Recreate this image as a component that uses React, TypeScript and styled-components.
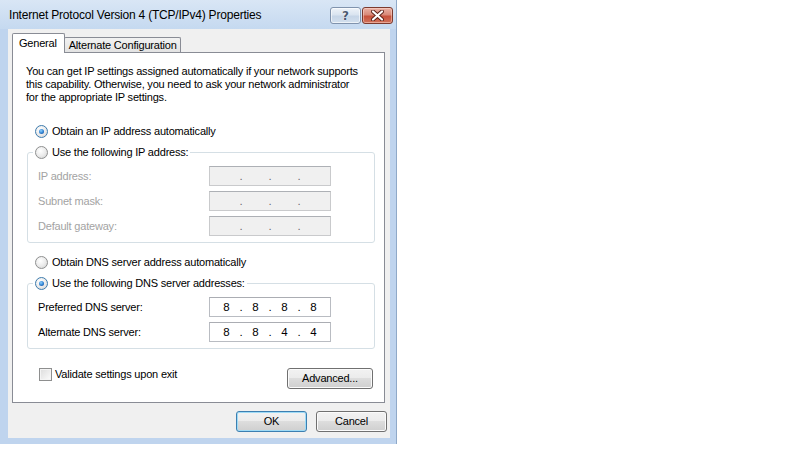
import React from 'react';
import styled, { createGlobalStyle, css } from 'styled-components';

const GlobalStyle = createGlobalStyle`
  html, body {
    margin: 0;
    padding: 0;
    background: #fff;
  }
  body {
    font-family: "Liberation Sans", Arial, sans-serif;
    font-size: 11px;
    letter-spacing: -0.2px;
    color: #000;
  }
  * { box-sizing: border-box; }
`;

const Window = styled.div`
  width: 397px;
  height: 444px;
  display: flex;
  flex-direction: column;
  background: #bfd4ee;
  border-right: 1px solid #8fa9c8;
`;

const TitleBar = styled.div`
  height: 29px;
  display: flex;
  align-items: flex-start;
  padding: 0 3px 0 9px;
  background: linear-gradient(#d9e6f5, #c5d9f0);
`;

const Title = styled.div`
  flex: 1;
  font-size: 12px;
  line-height: 14px;
  margin-top: 8px;
  color: #000;
`;

const CaptionButtons = styled.div`
  display: flex;
  gap: 1px;
  margin-top: 7px;
`;

const CaptionButton = styled.div<{ $close?: boolean }>`
  width: 31px;
  height: 17px;
  border-radius: 3px;
  display: flex;
  align-items: center;
  justify-content: center;
  ${(p) =>
    p.$close
      ? css`
          border: 1px solid #7c3a2e;
          background: linear-gradient(#eab1a5 0%, #d98a79 45%, #c8523c 55%, #d0735c 100%);
          box-shadow: inset 0 0 0 1px rgba(255, 220, 210, 0.5);
        `
      : css`
          border: 1px solid #8093ad;
          background: linear-gradient(#eef3f9 0%, #dae4f0 45%, #c6d5e7 55%, #d3e0ee 100%);
          box-shadow: inset 0 0 0 1px rgba(255, 255, 255, 0.6);
        `}
`;

const HelpGlyph = styled.span`
  font-family: "DejaVu Sans", sans-serif;
  font-weight: bold;
  font-size: 12px;
  line-height: 12px;
  color: #4b5a70;
  text-shadow: 0 0 1px #fff, 0 0 1px #fff;
`;

const Client = styled.div`
  flex: 1;
  margin: 0 6px 6px 8px;
  background: #f0f0f0;
  display: flex;
  flex-direction: column;
  padding: 4px 5px 6px 4px;
`;

const TabStrip = styled.div`
  display: flex;
  align-items: flex-end;
  height: 20px;
  margin-bottom: -1px;
  position: relative;
  z-index: 1;
`;

const Tab = styled.div<{ $active?: boolean }>`
  border: 1px solid #898c95;
  border-radius: 2px 2px 0 0;
  display: flex;
  align-items: center;
  ${(p) =>
    p.$active
      ? css`
          height: 20px;
          padding: 0 7px 2px 6px;
          background: #fff;
          border-bottom: none;
        `
      : css`
          height: 15px;
          margin-left: -1px;
          margin-bottom: 1px;
          padding: 0 3px 0 4px;
          border-bottom: none;
          background: linear-gradient(#f2f2f2, #e3e3e3);
        `}
`;

const Panel = styled.div`
  flex: 1;
  background: #fff;
  border: 1px solid #898c95;
  display: flex;
  flex-direction: column;
  padding-left: 13px;
`;

const Intro = styled.p`
  margin: 12px 0 0;
  line-height: 13px;
`;

const RadioRow = styled.label<{ $disabled?: boolean }>`
  display: flex;
  align-items: center;
  gap: 4px;
  height: 14px;
  margin-left: 9px;
  color: ${(p) => (p.$disabled ? '#a3a3a3' : '#000')};
`;

const RadioDot = styled.span<{ $checked?: boolean }>`
  width: 13px;
  height: 13px;
  border-radius: 50%;
  position: relative;
  flex: none;
  border: 1px solid ${(p) => (p.$checked ? '#3d7bad' : '#8e8f8f')};
  background: radial-gradient(circle at 40% 35%, #ffffff 0%, #ececec 50%, #cfcfcf 100%);
  ${(p) =>
    p.$checked &&
    css`
      &::after {
        content: '';
        position: absolute;
        left: 3px;
        top: 3px;
        width: 5px;
        height: 5px;
        border-radius: 50%;
        background: radial-gradient(circle at 40% 35%, #8ed0ff 0%, #2c7fd0 55%, #16428a 100%);
      }
    `}
`;

const Group = styled.fieldset<{ $top: number }>`
  margin: ${(p) => p.$top}px 0 0 1px;
  width: 348px;
  padding: 0 0 6px 10px;
  border: 1px solid #d5dfe5;
  border-radius: 3px;
  min-width: 0;
`;

const Legend = styled.legend`
  margin-left: -5px;
  padding: 0 2px;
  height: 14px;
  display: flex;
`;

const FieldGrid = styled.div`
  display: grid;
  grid-template-columns: 171px 122px;
  row-gap: 5px;
  margin-top: 7px;
`;

const FieldLabel = styled.span<{ $disabled?: boolean }>`
  display: flex;
  align-items: center;
  height: 20px;
  color: ${(p) => (p.$disabled ? '#a3a3a3' : '#000')};
`;

const IpBox = styled.div<{ $disabled?: boolean }>`
  height: 20px;
  display: flex;
  align-items: center;
  padding-left: 4px;
  border: 1px solid ${(p) => (p.$disabled ? '#c9cacc' : '#b9bcc2')};
  border-top-color: ${(p) => (p.$disabled ? '#adb0b5' : '#abadb3')};
  background: ${(p) => (p.$disabled ? '#f0f0f0' : '#fff')};
  color: ${(p) => (p.$disabled ? '#6d6d6d' : '#000')};
  font-size: 11.5px;
  letter-spacing: 0;
`;

const Octet = styled.span`
  width: 25px;
  text-align: center;
  line-height: 14px;
`;

const Dot = styled.span`
  width: 4px;
  text-align: center;
  line-height: 14px;
`;

const BottomRow = styled.div`
  display: flex;
  align-items: flex-start;
  justify-content: space-between;
  margin: 19px 11px 0 13px;
`;

const CheckRow = styled.label`
  display: flex;
  align-items: center;
  gap: 3px;
  height: 12px;
`;

const CheckBox = styled.span`
  width: 13px;
  height: 13px;
  border: 1px solid #8e8f8f;
  background: linear-gradient(135deg, #dcdcdc, #fcfcfc);
  box-shadow: inset 0 0 0 1px #f4f4f4;
  flex: none;
`;

const Button = styled.button<{ $w: number; $default?: boolean }>`
  width: ${(p) => p.$w}px;
  height: 21px;
  font-family: inherit;
  font-size: 11px;
  letter-spacing: -0.2px;
  color: #000;
  padding: 0 0 1px;
  border-radius: 3px;
  border: 1px solid ${(p) => (p.$default ? '#3c7fb1' : '#707070')};
  background: linear-gradient(#f2f2f2 0%, #ebebeb 49%, #dddddd 50%, #cfcfcf 100%);
  box-shadow: inset 0 0 0 1px ${(p) => (p.$default ? '#9fdbf6' : '#fbfbfb')};
`;

const Footer = styled.div`
  display: flex;
  justify-content: flex-end;
  gap: 9px;
  margin: 8px -2px 0 0;
`;

const IpField: React.FC<{ octets?: string[]; disabled?: boolean }> = ({ octets = ['', '', '', ''], disabled }) => (
  <IpBox $disabled={disabled}>
    {octets.map((o, i) => (
      <React.Fragment key={i}>
        {i > 0 && <Dot>.</Dot>}
        <Octet>{o}</Octet>
      </React.Fragment>
    ))}
  </IpBox>
);

const CloseIcon = () => (
  <svg width="13" height="11" viewBox="0 0 13 11">
    <path d="M2 1.5 L11 9.5 M11 1.5 L2 9.5" stroke="#5a1f16" strokeWidth="4" strokeLinecap="round" />
    <path d="M2 1.5 L11 9.5 M11 1.5 L2 9.5" stroke="#fff" strokeWidth="2.2" strokeLinecap="round" />
  </svg>
);

const App: React.FC = () => {
  const ipRows = ['IP address:', 'Subnet mask:', 'Default gateway:'];
  const dnsRows = [
    { label: 'Preferred DNS server:', octets: ['8', '8', '8', '8'] },
    { label: 'Alternate DNS server:', octets: ['8', '8', '4', '4'] },
  ];

  return (
    <>
      <GlobalStyle />
      <Window>
        <TitleBar>
          <Title>Internet Protocol Version 4 (TCP/IPv4) Properties</Title>
          <CaptionButtons>
            <CaptionButton>
              <HelpGlyph>?</HelpGlyph>
            </CaptionButton>
            <CaptionButton $close>
              <CloseIcon />
            </CaptionButton>
          </CaptionButtons>
        </TitleBar>
        <Client>
          <TabStrip>
            <Tab $active>General</Tab>
            <Tab>Alternate Configuration</Tab>
          </TabStrip>
          <Panel>
            <Intro>
              You can get IP settings assigned automatically if your network supports
              <br />
              this capability. Otherwise, you need to ask your network administrator
              <br />
              for the appropriate IP settings.
            </Intro>

            <RadioRow style={{ marginTop: 20 }}>
              <RadioDot $checked />
              Obtain an IP address automatically
            </RadioRow>
            <Group $top={7}>
              <Legend>
                <RadioRow as="span" style={{ marginLeft: 0 }}>
                  <RadioDot />
                  Use the following IP address:
                </RadioRow>
              </Legend>
              <FieldGrid>
                {ipRows.map((label) => (
                  <React.Fragment key={label}>
                    <FieldLabel $disabled>{label}</FieldLabel>
                    <IpField disabled />
                  </React.Fragment>
                ))}
              </FieldGrid>
            </Group>

            <RadioRow style={{ marginTop: 12 }}>
              <RadioDot />
              Obtain DNS server address automatically
            </RadioRow>
            <Group $top={7}>
              <Legend>
                <RadioRow as="span" style={{ marginLeft: 0 }}>
                  <RadioDot $checked />
                  Use the following DNS server addresses:
                </RadioRow>
              </Legend>
              <FieldGrid>
                {dnsRows.map((row) => (
                  <React.Fragment key={row.label}>
                    <FieldLabel>{row.label}</FieldLabel>
                    <IpField octets={row.octets} />
                  </React.Fragment>
                ))}
              </FieldGrid>
            </Group>

            <BottomRow>
              <CheckRow>
                <CheckBox />
                Validate settings upon exit
              </CheckRow>
              <Button $w={86}>Advanced...</Button>
            </BottomRow>
          </Panel>
          <Footer>
            <Button $w={71} $default>
              OK
            </Button>
            <Button $w={71}>Cancel</Button>
          </Footer>
        </Client>
      </Window>
    </>
  );
};

export default App;
